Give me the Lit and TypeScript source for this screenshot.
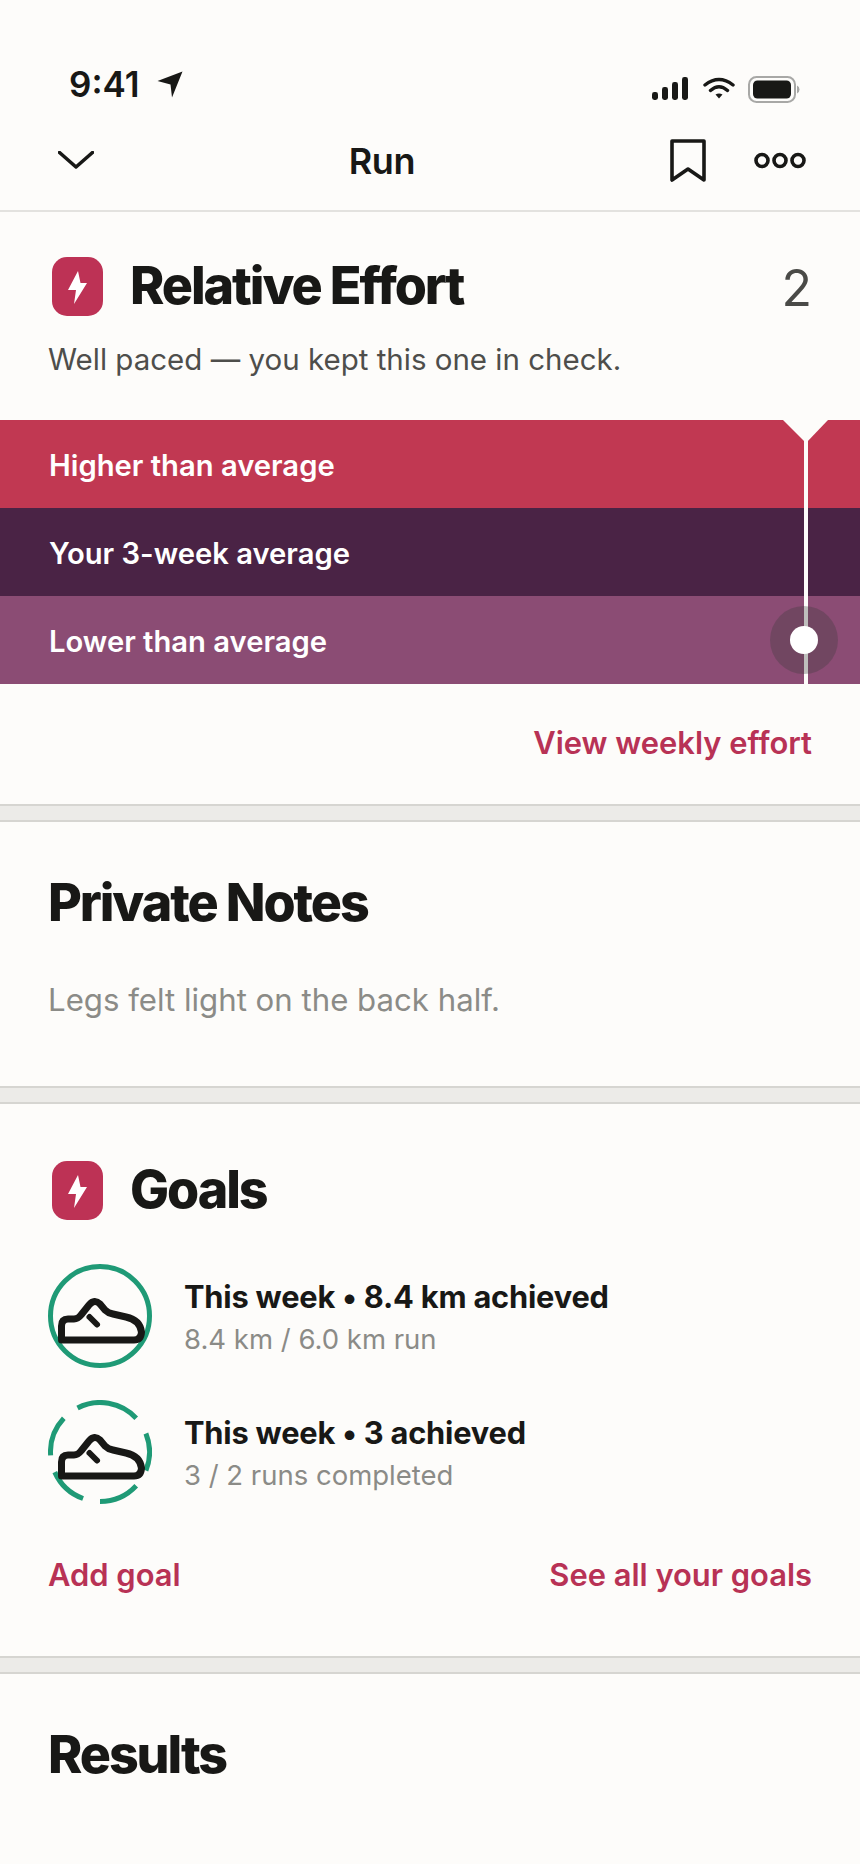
import { html, svg, LitElement, css } from "lit";
import { customElement } from "lit/decorators.js";

const arcPath = (from: number, to: number, r = 50, c = 52) => {
  const rad = (a: number) => (a * Math.PI) / 180;
  const x1 = c + r * Math.cos(rad(from));
  const y1 = c + r * Math.sin(rad(from));
  const x2 = c + r * Math.cos(rad(to));
  const y2 = c + r * Math.sin(rad(to));
  return `M${x1.toFixed(2)} ${y1.toFixed(2)}A${r} ${r} 0 0 1 ${x2.toFixed(2)} ${y2.toFixed(2)}`;
};

const dashedArcs = [
  [-117, -43],
  [-22, 22],
  [43, 90],
  [110, 156],
  [176, 223],
];

const boltBadge = html`
  <svg class="badge" width="51" height="59" viewBox="0 0 51 59">
    <rect width="51" height="59" rx="15" fill="#bd3255" />
    <path d="M26 14 L16 33 L24 33 L22 47 L35 26 L28.5 26 Z" fill="#fff" />
  </svg>
`;

const shoe = svg`
  <path d="M13.5 76V62Q13.5 55 20 55H26Q30 55 33 51L41 41Q46.5 34.5 52 40L57 46Q60 49 65 50L78 53Q92 56 93.5 68Q93 76 86 76Z"
    fill="none" stroke="#181816" stroke-width="7" stroke-linejoin="round" />
  <path d="M41.5 53L49 60.5" fill="none" stroke="#181816" stroke-width="6" stroke-linecap="round" />
`;

@customElement("app-root")
export class AppRoot extends LitElement {
  static styles = css`
    :host {
      display: block;
      width: 860px;
      height: 1864px;
      overflow: hidden;
      background: #fdfcfa;
      color: #181816;
      font-family: Inter, "Liberation Sans", sans-serif;
    }

    .status {
      height: 120px;
      box-sizing: border-box;
      padding: 64px 60px 0 69px;
      display: flex;
      justify-content: space-between;
      align-items: flex-start;
    }

    .time {
      display: flex;
      align-items: center;
      gap: 17px;
      font-size: 35px;
      font-weight: 600;
      line-height: 40px;
    }

    .status-icons {
      display: flex;
      align-items: flex-start;
      padding-top: 12px;
    }

    .wifi {
      margin: 0 13px 0 15px;
    }

    .nav {
      height: 92px;
      box-sizing: border-box;
      padding: 19px 54px 0 58px;
      display: flex;
      justify-content: space-between;
      align-items: flex-start;
      border-bottom: 2px solid #e3e2df;
    }

    .nav-title {
      font-size: 36px;
      font-weight: 600;
      line-height: 44px;
      letter-spacing: -0.3px;
    }

    .chevron {
      margin-top: 12px;
    }

    .nav-actions {
      display: flex;
      align-items: flex-start;
      gap: 48px;
    }

    .dots {
      margin-top: 13px;
    }

    .section-head {
      display: flex;
      align-items: center;
      gap: 27px;
      padding-left: 52px;
    }

    h2 {
      margin: 0;
      font-size: 52px;
      font-weight: 800;
      line-height: 60px;
      letter-spacing: -2.1px;
    }

    .effort {
      height: 592px;
    }

    .effort .section-head {
      padding-top: 44px;
      padding-right: 48px;
    }

    .effort h2 {
      flex: 1;
    }

    .score {
      padding-top: 4px;
      font-size: 50px;
      line-height: 56px;
      color: #4a4a47;
    }

    .lede {
      margin: 23px 0 0 48px;
      font-size: 29.5px;
      line-height: 40px;
      color: #4e4e4b;
    }

    .bands {
      margin-top: 41px;
      position: relative;
    }

    .band {
      height: 88px;
      box-sizing: border-box;
      padding: 2px 0 0 49px;
      display: flex;
      align-items: center;
      color: #fff;
      font-size: 29.2px;
      font-weight: 600;
    }

    .band.high {
      background: #c13852;
    }

    .band.mid {
      background: #4a2345;
    }

    .band.low {
      background: #8b4c74;
    }

    .marker {
      position: absolute;
      top: 0;
      left: 0;
      pointer-events: none;
    }

    .link {
      color: #b83255;
      font-size: 30.9px;
      font-weight: 600;
      line-height: 40px;
    }

    .effort-foot {
      padding: 39px 48px 0 0;
      text-align: right;
    }

    .gap {
      height: 18px;
      box-sizing: border-box;
      background: #ecebe8;
      border-top: 2px solid #d6d5d1;
      border-bottom: 2px solid #d6d5d1;
    }

    .notes {
      height: 264px;
      box-sizing: border-box;
      padding: 51px 48px 0;
    }

    .note {
      margin: 47px 0 0;
      font-size: 31.2px;
      line-height: 40px;
      color: #8b8b87;
    }

    .goals {
      height: 552px;
      box-sizing: border-box;
      padding-top: 56px;
    }

    .goal-list {
      display: flex;
      flex-direction: column;
      gap: 32px;
      margin-top: 44px;
      padding-left: 48px;
    }

    .goal {
      display: flex;
      align-items: center;
      gap: 32px;
    }

    .goal-title {
      font-size: 30.8px;
      font-weight: 700;
      line-height: 40px;
      letter-spacing: -0.2px;
      margin-top: 2px;
    }

    .goal-sub {
      margin-top: 4px;
      font-size: 27.5px;
      line-height: 36px;
      color: #8b8b87;
    }

    .goal-links {
      display: flex;
      justify-content: space-between;
      padding: 51px 48px 0 48px;
    }

    .results {
      padding: 51px 48px 0;
    }
  `;

  render() {
    return html`
      <div class="status">
        <div class="time">
          <span>9:41</span>
          <svg width="26" height="27" viewBox="0 0 26 27">
            <path d="M25.5 0.5L0.5 10L13.5 13.5L15 26.5Z" fill="#181816" />
          </svg>
        </div>
        <div class="status-icons">
          <svg width="36" height="26" viewBox="0 0 36 26">
            <rect x="0" y="16" width="6" height="8" rx="2.4" fill="#181816" />
            <rect x="10" y="11" width="6" height="13" rx="2.4" fill="#181816" />
            <rect x="20" y="6" width="6" height="18" rx="2.4" fill="#181816" />
            <rect x="30" y="1" width="6" height="23" rx="2.4" fill="#181816" />
          </svg>
          <svg class="wifi" width="32" height="26" viewBox="0 0 32 26">
            <path d="M2 9Q16 -2 30 9M7.5 14.5Q16 7 24.5 14.5" fill="none" stroke="#181816" stroke-width="3.4" stroke-linecap="round" />
            <path d="M12.5 18.5Q16 16.5 19.5 18.5L16 22.5Z" fill="#181816" />
          </svg>
          <svg width="52" height="28" viewBox="0 0 52 28">
            <rect x="1" y="1" width="46" height="25" rx="7.5" fill="none" stroke="#a8a8a6" stroke-width="2" />
            <rect x="5" y="4.5" width="38" height="18" rx="4.5" fill="#181816" />
            <path d="M49 9.5Q51.5 10.5 51.5 13.5Q51.5 16.5 49 17.5Z" fill="#a8a8a6" />
          </svg>
        </div>
      </div>

      <div class="nav">
        <svg class="chevron" width="36" height="18" viewBox="0 0 36 18">
          <path d="M1.5 1.5L18 16L34.5 1.5" fill="none" stroke="#181816" stroke-width="3.6" stroke-linecap="round" stroke-linejoin="round" />
        </svg>
        <div class="nav-title">Run</div>
        <div class="nav-actions">
          <svg width="36" height="43" viewBox="0 0 36 43">
            <path d="M2 2H34V41L18 30L2 41Z" fill="none" stroke="#181816" stroke-width="3.6" stroke-linejoin="round" />
          </svg>
          <svg class="dots" width="52" height="17" viewBox="0 0 52 17">
            <circle cx="8" cy="8.5" r="6" fill="none" stroke="#181816" stroke-width="3.6" />
            <circle cx="26" cy="8.5" r="6" fill="none" stroke="#181816" stroke-width="3.6" />
            <circle cx="44" cy="8.5" r="6" fill="none" stroke="#181816" stroke-width="3.6" />
          </svg>
        </div>
      </div>

      <section class="effort">
        <div class="section-head">
          ${boltBadge}
          <h2>Relative Effort</h2>
          <span class="score">2</span>
        </div>
        <p class="lede">Well paced — you kept this one in check.</p>
        <div class="bands">
          <div class="band high">Higher than average</div>
          <div class="band mid">Your 3-week average</div>
          <div class="band low">Lower than average</div>
          <svg class="marker" width="860" height="264" viewBox="0 0 860 264">
            <path d="M783 0H828L806 23Z" fill="#fdfcfa" />
            <rect x="804" y="20" width="4" height="244" fill="#fdfcfa" />
            <circle cx="804" cy="220" r="34" fill="#3c3c3c" fill-opacity="0.32" />
            <circle cx="804" cy="220" r="14" fill="#fff" />
          </svg>
        </div>
        <div class="effort-foot"><span class="link">View weekly effort</span></div>
      </section>

      <div class="gap"></div>

      <section class="notes">
        <h2>Private Notes</h2>
        <p class="note">Legs felt light on the back half.</p>
      </section>

      <div class="gap"></div>

      <section class="goals">
        <div class="section-head">
          ${boltBadge}
          <h2>Goals</h2>
        </div>
        <div class="goal-list">
          <div class="goal">
            <svg width="104" height="104" viewBox="0 0 104 104">
              <circle cx="52" cy="52" r="49.5" fill="none" stroke="#1f9a76" stroke-width="5" />
              ${shoe}
            </svg>
            <div>
              <div class="goal-title">This week • 8.4 km achieved</div>
              <div class="goal-sub">8.4 km / 6.0 km run</div>
            </div>
          </div>
          <div class="goal">
            <svg width="104" height="104" viewBox="0 0 104 104">
              ${dashedArcs.map(
                ([from, to]) => svg`<path d=${arcPath(from, to, 49.5)} fill="none" stroke="#1f9a76" stroke-width="5" />`
              )}
              ${shoe}
            </svg>
            <div>
              <div class="goal-title">This week • 3 achieved</div>
              <div class="goal-sub">3 / 2 runs completed</div>
            </div>
          </div>
        </div>
        <div class="goal-links">
          <span class="link">Add goal</span>
          <span class="link">See all your goals</span>
        </div>
      </section>

      <div class="gap"></div>

      <section class="results">
        <h2>Results</h2>
      </section>
    `;
  }
}
